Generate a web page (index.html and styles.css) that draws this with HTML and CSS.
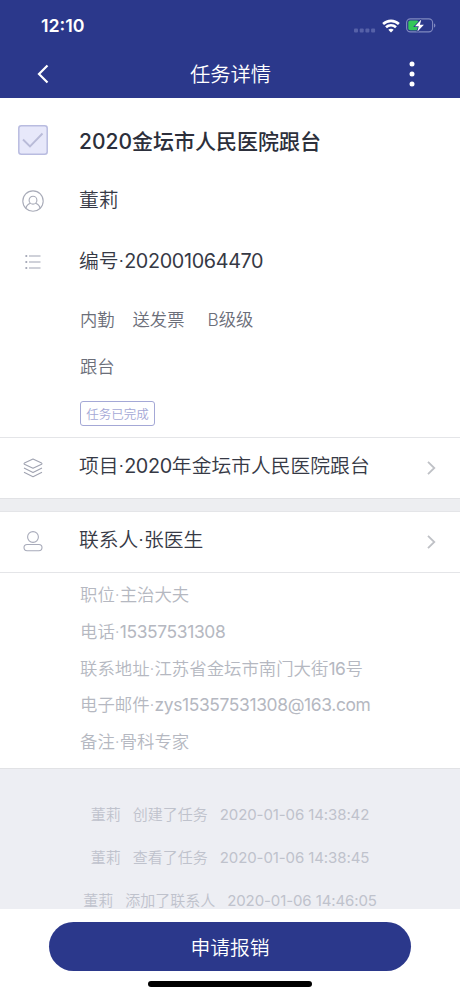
FILE: index.html
```html
<!DOCTYPE html>
<html lang="zh-CN">
<head>
    <meta charset="UTF-8">
    <meta name="viewport" content="width=device-width, initial-scale=1">
    <title>任务详情</title>
    <link rel="stylesheet" href="styles.css">
</head>
<body>
    <header class="header">
        <div class="status-bar">
            <span class="time">12:10</span>
            <div class="status-icons">
                <svg class="signal" width="22" height="5" viewBox="0 0 22 5" fill="#5661a8">
                    <rect x="0" y="0.5" width="4" height="4" rx="1"/>
                    <rect x="5.7" y="0.5" width="4" height="4" rx="1"/>
                    <rect x="11.4" y="0.5" width="4" height="4" rx="1"/>
                    <rect x="17.1" y="0.5" width="4" height="4" rx="1"/>
                </svg>
                <svg class="wifi" width="18" height="14" viewBox="0 0 18 14" fill="none" stroke="#fff" stroke-width="2.6">
                    <path d="M1.1 5C5.6.8 12.4.8 16.9 5"/>
                    <path d="M4 8.3c2.8-2.7 7.2-2.7 10 0"/>
                    <path d="M9 13.500 6.300 10.700c1.500-1.400 3.900-1.400 5.400 0z" fill="#fff" stroke="none"/>
                </svg>
                <svg class="battery" width="30" height="15" viewBox="0 0 30 15">
                    <rect x="0.6" y="0.9" width="26" height="13" rx="3.8" fill="none" stroke="#8089c0" stroke-width="1.1"/>
                    <path d="M28 5.4c1.8.5 1.8 3.5 0 4z" fill="#8089c0"/>
                    <rect x="2.3" y="2.6" width="10.5" height="9.6" rx="2" fill="#34c759"/>
                    <path d="M15.3 1.5 9 8.2h3.8L11.3 13.7 17.9 6.8h-4z" fill="#fff" stroke="#2b388b" stroke-width="1.6" paint-order="stroke"/>
                </svg>
            </div>
        </div>
        <nav class="nav-bar">
            <svg class="back" width="12" height="20" viewBox="0 0 12 20" fill="none" stroke="#fff" stroke-width="2.2">
                <path d="M10.500 1.500 2 10l8.500 8.500"/>
            </svg>
            <h1>任务详情</h1>
            <svg class="more" width="6" height="26" viewBox="0 0 6 26" fill="#fff">
                <circle cx="3" cy="3" r="2.5"/>
                <circle cx="3" cy="13" r="2.5"/>
                <circle cx="3" cy="23" r="2.5"/>
            </svg>
        </nav>
    </header>

    <main class="content">
        <section class="task">
            <div class="row row-title">
                <div class="icon">
                    <svg width="30" height="30" viewBox="0 0 30 30" fill="none">
                        <rect x="0.8" y="0.8" width="28.4" height="28.4" rx="2.5" fill="#e7e8fa" stroke="#b9bce0" stroke-width="1.5"/>
                        <path d="M5 14.500 12 21.500 24.500 8.500" stroke="#b9bbd8" stroke-width="1.9"/>
                    </svg>
                </div>
                <h2>2020金坛市人民医院跟台</h2>
            </div>
            <div class="row row-owner">
                <div class="icon">
                    <svg width="22" height="22" viewBox="0 0 22 22" fill="none" stroke="#a8abb8" stroke-width="1.1">
                        <path d="M4 18.500a10.200 10.200 0 1 1 14 0"/>
                        <circle cx="11" cy="10.200" r="3.900"/>
                        <path d="M8.600 13.300C6 14 4.400 15.800 4 18.500c3.800 3.600 10.200 3.600 14 0-.4-2.700-2-4.500-4.600-5.200"/>
                    </svg>
                </div>
                <p>董莉</p>
            </div>
            <div class="row row-number">
                <div class="icon">
                    <svg width="16" height="16" viewBox="0 0 16 16" fill="#a0a4b4">
                        <circle cx="1.3" cy="2" r="1.1"/>
                        <circle cx="1.3" cy="8" r="1.1"/>
                        <circle cx="1.3" cy="14" r="1.1"/>
                        <path d="M4 1.500h11.500v1H4zM4 7.500h11.500v1H4zM4 13.500h11.500v1H4z"/>
                    </svg>
                </div>
                <p>编号·<span class="num">202001064470</span></p>
            </div>
            <div class="tags">
                <span>内勤</span>
                <span>送发票</span>
                <span class="level">B级级</span>
            </div>
            <div class="tags">
                <span>跟台</span>
            </div>
            <span class="badge">任务已完成</span>
        </section>

        <section class="row link-row">
            <div class="icon">
                <svg width="20" height="20" viewBox="0 0 20 20" fill="none" stroke="#a0a3b1" stroke-width="1.1" stroke-linejoin="round">
                    <path d="M10 1 18.600 5.100c.5.300.5.800 0 1.100L10 10.300 1.400 6.200c-.5-.3-.5-.8 0-1.100z"/>
                    <path d="M1 10.100l9 4.500 9-4.500M1 14.300l9 4.500 9-4.500"/>
                </svg>
            </div>
            <p>项目·<span class="num">2020</span>年金坛市人民医院跟台</p>
            <svg class="arrow" width="9" height="14" viewBox="0 0 9 14" fill="none" stroke="#bfc1c6" stroke-width="1.8">
                <path d="M1 .8 7.300 7 1 13.200"/>
            </svg>
        </section>

        <div class="gap"></div>

        <section class="row link-row">
            <div class="icon">
                <svg width="20" height="22" viewBox="0 0 20 22" fill="none" stroke="#a8abba" stroke-width="1.1">
                    <circle cx="10" cy="6" r="5.4"/>
                    <rect x="1" y="13.5" width="18" height="6.2" rx="3.1"/>
                </svg>
            </div>
            <p>联系人·张医生</p>
            <svg class="arrow" width="9" height="14" viewBox="0 0 9 14" fill="none" stroke="#bfc1c6" stroke-width="1.8">
                <path d="M1 .8 7.300 7 1 13.200"/>
            </svg>
        </section>

        <section class="details">
            <p>职位·主治大夫</p>
            <p>电话·<span class="num">15357531308</span></p>
            <p>联系地址·江苏省金坛市南门大街<span class="num">16</span>号</p>
            <p>电子邮件·<span class="num">zys15357531308@163.com</span></p>
            <p>备注·骨科专家</p>
        </section>

        <section class="logs">
            <p><span>董莉</span><span>创建了任务</span><span class="date">2020-01-06 14:38:42</span></p>
            <p><span>董莉</span><span>查看了任务</span><span class="date">2020-01-06 14:38:45</span></p>
            <p><span>董莉</span><span>添加了联系人</span><span class="date">2020-01-06 14:46:05</span></p>
        </section>
    </main>

    <footer class="footer">
        <button class="submit">申请报销</button>
        <div class="home-indicator"></div>
    </footer>
</body>
</html>
```
FILE: styles.css
```css
* {
    box-sizing: border-box;
    margin: 0;
    padding: 0;
}

body {
    display: flex;
    flex-direction: column;
    height: 996px;
    overflow: hidden;
    font-family: Inter, "Noto Sans CJK SC", sans-serif;
    font-size: 19.8px;
    font-weight: 350;
    color: #363945;
    background-color: #fff;
}

svg {
    display: block;
    flex-shrink: 0;
}

.header {
    height: 98px;
    flex-shrink: 0;
    background-color: #2b388b;
    color: #fff;
}

.status-bar {
    display: flex;
    justify-content: space-between;
    align-items: center;
    height: 50px;
    padding: 1px 24px 0 41px;
}

.time {
    font-size: 17.8px;
    font-weight: 600;
}

.status-icons {
    display: flex;
    align-items: center;
    gap: 6px;
}

.signal {
    margin-top: 9px;
}

.nav-bar {
    display: flex;
    justify-content: space-between;
    align-items: center;
    height: 47px;
    padding: 0 45px 0 37px;
}

.nav-bar h1 {
    font-size: 20.3px;
    font-weight: 350;
    padding: 0 0 2px 3px;
}

.content {
    flex: 1;
    min-height: 0;
    overflow: hidden;
}

.task {
    height: 339px;
    padding-top: 13px;
}

.row {
    display: flex;
    align-items: center;
}

.icon {
    display: flex;
    justify-content: center;
    width: 67px;
    margin-right: 12px;
    padding-right: 1px;
}

.num {
    font-weight: 400;
    letter-spacing: -0.35px;
}

.row-title {
    height: 58px;
}

.row-title .icon {
    margin-top: -1px;
}

.row-title h2 {
    font-size: 21px;
    font-weight: 500;
    color: #2c2f3b;
}

.row-owner {
    height: 60px;
}

.row-number {
    height: 62px;
}

.row-owner .icon,
.row-number .icon {
    padding-top: 4px;
}

.row-owner p,
.row-number p {
    padding-bottom: 2px;
}

.tags {
    display: flex;
    align-items: center;
    gap: 18px;
    height: 47px;
    padding: 0 0 2px 80px;
    font-size: 17.3px;
    color: #6b6e79;
}

.tags .level {
    margin-left: 5px;
}

.row-number + .tags {
    margin-top: 5px;
}

.badge {
    display: flex;
    justify-content: center;
    align-items: center;
    width: 75px;
    height: 25px;
    margin: 11px 0 0 80px;
    padding-bottom: 1px;
    border: 1px solid #a4a8d6;
    border-radius: 3px;
    font-size: 12.5px;
    color: #a4a8d6;
}

.link-row {
    height: 61px;
    padding-right: 24px;
    border-top: 1px solid #e4e5e8;
}

.link-row p {
    flex: 1;
    padding-bottom: 7px;
}

.gap {
    height: 13px;
    background-color: #edeef1;
    border-top: 1px solid #e1e2e5;
}

.details {
    height: 197px;
    padding: 4px 0 0 80px;
    border-top: 1px solid #e4e5e8;
    border-bottom: 1px solid #e1e2e5;
    font-size: 17.4px;
    line-height: 36.8px;
    color: #b5b8c1;
}

.logs {
    height: 160px;
    padding-top: 24px;
    background-color: #edeef3;
    font-size: 15px;
    line-height: 43px;
    color: #bfc2cc;
}

.logs p {
    display: flex;
    justify-content: center;
    gap: 12px;
}

.date {
    font-weight: 400;
    letter-spacing: -0.1px;
}

.footer {
    display: flex;
    flex-direction: column;
    align-items: center;
    flex-shrink: 0;
    height: 87px;
    padding-top: 13px;
    background-color: #fff;
}

.submit {
    width: 362px;
    height: 49px;
    border: none;
    border-radius: 25px;
    background-color: #2b388b;
    color: #fff;
    font-family: inherit;
    font-size: 19.8px;
    font-weight: 350;
}

.home-indicator {
    width: 164px;
    height: 6px;
    margin-top: 10px;
    border-radius: 3px;
    background-color: #000;
}
```
